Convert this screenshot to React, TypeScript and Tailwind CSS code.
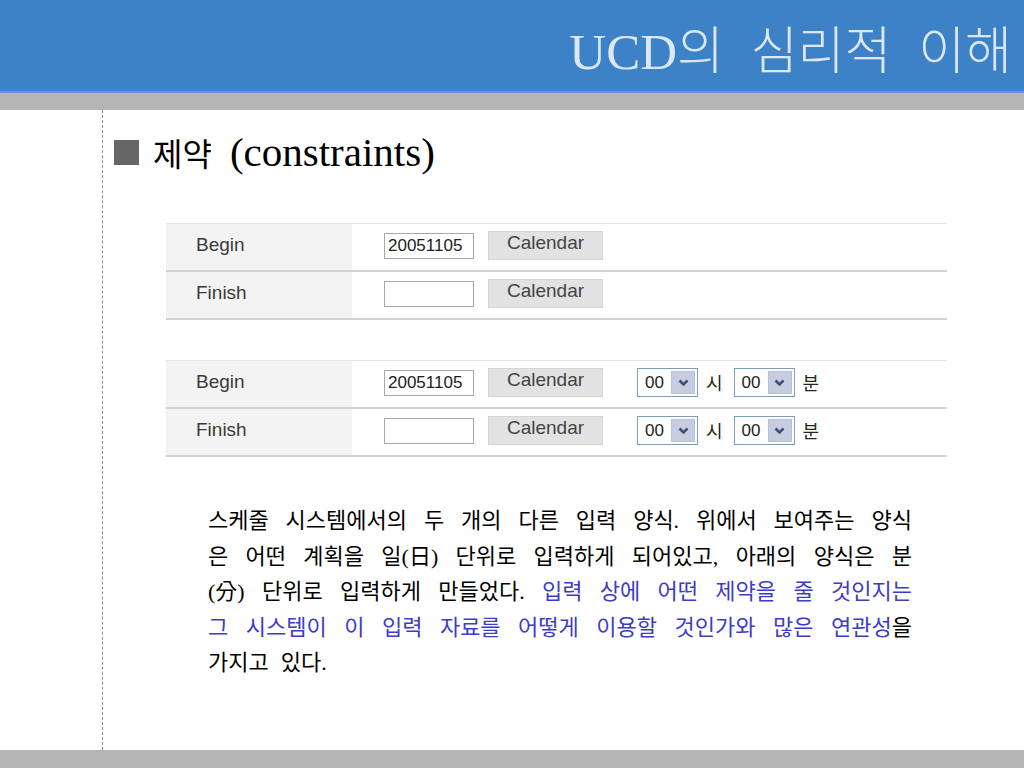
import React from 'react';

const serif = '"Liberation Serif", "Noto Sans CJK KR", serif';
const sans = '"Liberation Sans", "Noto Sans CJK KR", sans-serif';
const kr = '"Noto Sans CJK KR", sans-serif';

function Chevron() {
  return (
    <svg width="11" height="8" viewBox="0 0 11 8">
      <polyline points="1.5,1.5 5.5,5.5 9.5,1.5" fill="none" stroke="#3f4f78" strokeWidth="2.6" />
    </svg>
  );
}

function TimeSelect() {
  return (
    <div className="flex h-[29px] w-[61px] items-stretch border border-[#7f9db9] bg-white p-[2px]">
      <span className="flex flex-1 items-center pl-[5px] text-[17px] leading-none text-[#222]" style={{ fontFamily: sans }}>
        00
      </span>
      <div className="flex w-[24px] items-center justify-center border border-[#b7c1d8] bg-[#c6cde0]">
        <Chevron />
      </div>
    </div>
  );
}

function FormRow({ label, value, time }: { label: string; value: string; time?: boolean }) {
  return (
    <div className="flex h-[48px] border-b-2 border-[#d2d2d2]">
      <div
        className="flex w-[186px] items-center bg-[#f3f3f3] pb-[3px] pl-[30px] text-[19px] text-[#3a3a3a]"
        style={{ fontFamily: sans }}
      >
        {label}
      </div>
      <div className="flex items-center pb-[3px] pl-[32px]">
        <div
          className="h-[26px] w-[90px] border border-[#a8a8a8] bg-white pl-[3px] text-[17px] leading-[24px] text-[#222]"
          style={{ fontFamily: sans }}
        >
          {value}
        </div>
        <div
          className="ml-[14px] h-[29px] w-[115px] border border-[#d4d4d4] bg-[#e2e2e2] text-center text-[19px] leading-[22px] text-[#444]"
          style={{ fontFamily: sans }}
        >
          Calendar
        </div>
        {time && (
          <div className="ml-[34px] flex items-center text-[18px] text-[#222]" style={{ fontFamily: kr }}>
            <TimeSelect />
            <span className="ml-[8px] mr-[11px]">시</span>
            <TimeSelect />
            <span className="ml-[8px]">분</span>
          </div>
        )}
      </div>
    </div>
  );
}

// each line is a row of words spread edge to edge, like justified text
function Line({ words, last }: { words: React.ReactNode[]; last?: boolean }) {
  return (
    <div className={last ? 'flex gap-[12px]' : 'flex justify-between'}>
      {words.map((w, i) => (
        <span key={i}>{w}</span>
      ))}
    </div>
  );
}

const blue = (t: string) => <span className="text-[#3c3cc8]">{t}</span>;

export default function App() {
  return (
    <div className="flex h-[768px] w-[1024px] flex-col overflow-hidden bg-white">
      <header className="flex h-[91px] items-start justify-end bg-[#3d81c7] pr-[12px] pt-[27px]">
        <h1
          className="text-[51px] font-light leading-none text-[#dbe7f5] [word-spacing:14px]"
          style={{ fontFamily: serif }}
        >
          UCD의 심리적 이해
        </h1>
      </header>
      <div className="h-[2px] bg-[#5b97d6]" />
      <div className="h-[17px] bg-[#b4b4b4]" />

      <main className="flex flex-1">
        <div className="w-[103px] shrink-0 border-r border-dashed border-[#8e8e8e]" />
        <div className="flex flex-col">
          <div className="mt-[22px] flex h-[40px] items-center pl-[11px]">
            <div className="h-[25px] w-[25px] bg-[#666666]" />
            <span className="ml-[14px] text-[32px] leading-none text-black" style={{ fontFamily: kr }}>
              제약
            </span>
            <span className="ml-[18px] text-[41px] leading-none text-black" style={{ fontFamily: serif }}>
              (constraints)
            </span>
          </div>

          <div className="ml-[63px] mt-[51px] w-[781px] border-t border-[#e4e4e4]">
            <FormRow label="Begin" value="20051105" />
            <FormRow label="Finish" value="" />
          </div>

          <div className="ml-[63px] mt-[40px] w-[781px] border-t border-[#e4e4e4]">
            <FormRow label="Begin" value="20051105" time />
            <FormRow label="Finish" value="" time />
          </div>

          <div
            className="ml-[105px] mt-[46px] w-[704px] text-[22px] leading-[35.5px] text-black"
            style={{ fontFamily: serif }}
          >
            <Line words={['스케줄', '시스템에서의', '두', '개의', '다른', '입력', '양식.', '위에서', '보여주는', '양식']} />
            <Line words={['은', '어떤', '계획을', '일(日)', '단위로', '입력하게', '되어있고,', '아래의', '양식은', '분']} />
            <Line
              words={[
                '(分)',
                '단위로',
                '입력하게',
                '만들었다.',
                blue('입력'),
                blue('상에'),
                blue('어떤'),
                blue('제약을'),
                blue('줄'),
                blue('것인지는'),
              ]}
            />
            <Line
              words={[
                blue('그'),
                blue('시스템이'),
                blue('이'),
                blue('입력'),
                blue('자료를'),
                blue('어떻게'),
                blue('이용할'),
                blue('것인가와'),
                blue('많은'),
                <>
                  {blue('연관성')}을
                </>,
              ]}
            />
            <Line last words={['가지고', '있다.']} />
          </div>
        </div>
      </main>

      <footer className="h-[18px] bg-[#b4b4b4]" />
    </div>
  );
}
